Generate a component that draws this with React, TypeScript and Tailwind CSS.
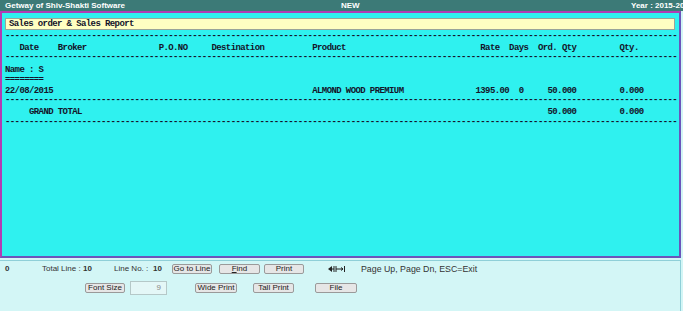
import React from 'react';

const CHAR = 140;

// place each text at a fixed character column, like the old report printer does
const line = (parts: [string, number][]) => {
    let out = '';
    for (const [text, col] of parts) {
        if (out.length < col) out = out.padEnd(col, ' ');
        out += text;
    }
    return out;
};

const dashes = '-'.repeat(CHAR);

const reportLines: string[] = [
    dashes,
    line([['Date', 3], ['Broker', 11], ['P.O.NO', 32], ['Destination', 43], ['Product', 64], ['Rate', 99], ['Days', 105], ['Ord. Qty', 111], ['Qty.', 128]]),
    dashes,
    line([['Name : S', 0]]),
    '========',
    line([['22/08/2015', 0], ['ALMOND WOOD PREMIUM', 64], ['1395.00', 98], ['0', 107], ['50.000', 113], ['0.000', 128]]),
    dashes,
    line([['GRAND TOTAL', 5], ['50.000', 113], ['0.000', 128]]),
    dashes,
];

const Btn: React.FC<{ label: React.ReactNode; className?: string }> = ({ label, className = '' }) => (
    <button
        className={`h-[10px] flex items-center justify-center bg-[#e6e6e6] border border-[#9a9a9a] rounded-[2px] text-[8px] leading-none text-[#222] whitespace-nowrap ${className}`}
    >
        {label}
    </button>
);

const ArrowIcon = () => (
    <svg width="18" height="10" viewBox="0 0 18 10" className="text-[#222]">
        <path d="M0 5 L4 2 L4 8 Z" fill="currentColor" />
        <path d="M4 5 H6 M6 2 V8 M8 2 V8 M8 5 H15 M13 3.5 L15 5 L13 6.5 M16.5 2 V8" stroke="currentColor" strokeWidth="1" fill="none" />
    </svg>
);

export default function App() {
    return (
        <div className="w-[683px] h-[311px] overflow-hidden flex flex-col bg-[#d3f6f6]" style={{ fontFamily: '"Liberation Sans", Arial, sans-serif' }}>
            {/* title bar */}
            <div className="h-[11px] shrink-0 bg-[#3c7a77] flex items-center whitespace-nowrap overflow-hidden text-white text-[8px] font-bold leading-none">
                <span className="w-[341px] pl-[5px] shrink-0">Getway of Shiv-Shakti Software</span>
                <span className="w-[290px] shrink-0">NEW</span>
                <span className="shrink-0">Year : 2015-2016</span>
            </div>

            {/* report panel */}
            <div className="h-[247px] shrink-0 mr-[2px] bg-[#2ff1ef] border-2 border-l-[#b23cb4] border-t-[#b23cb4] border-r-[#6a55bb] border-b-[#6a55bb]">
                <div
                    className="text-[9px] tracking-[-0.6px] font-bold text-[#14142a]"
                    style={{ fontFamily: '"Liberation Mono", "Courier New", monospace' }}
                >
                    <div className="mt-[5px] ml-[3px] mr-[4px] h-[12px] bg-[#ffffc2] border border-[#9aa59a] flex items-center pl-[3px] leading-none">
                        Sales order &amp; Sales Report
                    </div>
                    <div className="pl-[3px] pt-[1px] leading-[10.7px] whitespace-pre">
                        {reportLines.map((l, i) => (
                            <div key={i} className={l.startsWith('---') ? '' : 'relative top-[1.5px]'}>{l || ' '}</div>
                        ))}
                    </div>
                </div>
            </div>

            {/* bottom toolbar */}
            <div className="flex-1 mt-[2px] mr-[2px] border-t border-r border-[#8fcfd8] text-[8px] text-[#333] pt-[3px]">
                <div className="flex items-center h-[10px] leading-none whitespace-nowrap">
                    <span className="w-[42px] pl-[5px] font-bold shrink-0">0</span>
                    <span className="w-[41px] shrink-0">Total Line :</span>
                    <span className="font-bold w-[31px] shrink-0">10</span>
                    <span className="w-[39px] shrink-0">Line No. :</span>
                    <span className="font-bold w-[19px] shrink-0">10</span>
                    <Btn label="Go to Line" className="w-[40px] shrink-0" />
                    <Btn label={<><span className="underline">F</span>ind</>} className="w-[41px] ml-[7px] shrink-0" />
                    <Btn label="Print" className="w-[40px] ml-[4px] shrink-0" />
                    <span className="ml-[24px] shrink-0 flex"><ArrowIcon /></span>
                    <span className="ml-[15px] text-[8.8px]">Page Up, Page Dn, ESC=Exit</span>
                </div>
                <div className="flex items-center h-[14px] mt-[7px] leading-none">
                    <Btn label="Font Size" className="w-[40px] ml-[85px]" />
                    <div className="w-[37px] h-[14px] ml-[5px] bg-[#e4f7f7] border border-[#b5c8c8] flex items-center justify-end pr-[5px] text-[#888]">9</div>
                    <Btn label="Wide Print" className="w-[42px] ml-[28px]" />
                    <Btn label="Tall Print" className="w-[41px] ml-[16px]" />
                    <Btn label="File" className="w-[42px] ml-[21px]" />
                </div>
            </div>
        </div>
    );
}
